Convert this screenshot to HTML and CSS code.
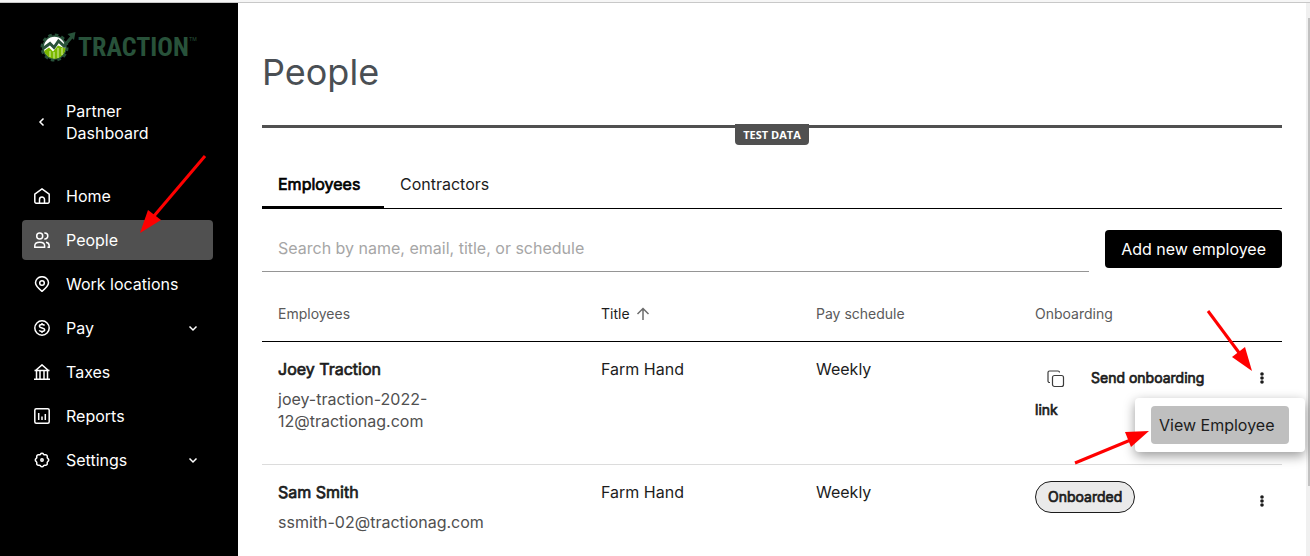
FILE: index.html
```html
<!DOCTYPE html>
<html lang="en">
<head>
  <meta charset="UTF-8">
  <meta name="viewport" content="width=device-width, initial-scale=1.0">
  <title>People - Traction</title>
  <link rel="stylesheet" href="styles.css">
</head>
<body>
  <div class="layout">
    <!-- Sidebar -->
    <aside class="sidebar">
      <a href="#" class="logo">
        <svg class="logo-mark" width="36" height="32" viewBox="0 0 36 32">
          <circle cx="14.500" cy="16.500" r="12.500" fill="none" stroke="#28523a" stroke-width="3" stroke-dasharray="3.5 3.040"/>
          <circle cx="14.500" cy="16.500" r="11.500" fill="#fff" stroke="#28523a" stroke-width="1.500"/>
          <path d="M4 20l5-3.500 4 4 5-6 7.500 3a11 11 0 0 1-21.500 2.500z" fill="#7ab800"/>
          <path d="M10 20v6M14 21v6.500M18 17v10M22 17v7" stroke="#d8edaa" stroke-width="1"/>
          <path d="M2.500 18l7.500-5.500 4 4L18.500 10l5.500 5L32.500 5" fill="none" stroke="#28523a" stroke-width="3"/>
          <path d="M27.500 3l8-2-1.500 8z" fill="#28523a"/>
        </svg>
        <span class="logo-text">TRACTION</span><span class="logo-tm">TM</span>
      </a>
      <a href="#" class="nav-link back">
        <svg class="icon" viewBox="0 0 16 16"><path d="M9.500 4.500L6 8l3.500 3.500"/></svg>
        <span>Partner Dashboard</span>
      </a>
      <nav class="nav">
        <a href="#" class="nav-link">
          <svg class="icon" viewBox="0 0 16 16"><path d="M.8 6.200L8 .9l7.200 5.300v7.600a1.400 1.400 0 0 1-1.400 1.400H2.200A1.400 1.400 0 0 1 .8 13.800zM5.500 15v-3.500a2.500 2.500 0 0 1 5 0V15"/></svg>
          <span>Home</span>
        </a>
        <a href="#" class="nav-link active">
          <svg class="icon" viewBox="0 0 16 16"><circle cx="5.700" cy="4" r="3"/><path d="M.8 15.200v-1.400c0-2 2-3.600 4.900-3.600s4.900 1.600 4.900 3.600v1.400zM10.300 1h.5a3 3 0 0 1 0 6h-.5M12 10.200c2 .3 3.200 1.700 3.200 3.600v1.400h-1.700"/></svg>
          <span>People</span>
          <svg class="arrow arrow-nav" width="68" height="80" viewBox="0 0 68 80"><path d="M66 2L15 62" stroke="red" stroke-width="3"/><path d="M1 79l8-23 13 10z" fill="red"/></svg>
        </a>
        <a href="#" class="nav-link">
          <svg class="icon" viewBox="0 0 16 16"><path d="M8 15.300C4 12 1.500 9.500 1.500 6.700a6.500 6 0 0 1 13 0C14.500 9.500 12 12 8 15.300z"/><circle cx="8" cy="7" r="2.300"/></svg>
          <span>Work locations</span>
        </a>
        <a href="#" class="nav-link">
          <svg class="icon" viewBox="0 0 16 16"><circle cx="8" cy="8" r="7.200"/><path d="M10.600 5.500C10 4.700 9 4.500 8 4.500c-1.500 0-2.600.6-2.600 1.700C5.400 8.500 10.700 7.500 10.700 9.800c0 1.100-1.200 1.700-2.700 1.700-1.100 0-2.200-.3-2.800-1.100M8 3v1.500M8 11.500V13"/></svg>
          <span>Pay</span>
          <svg class="icon chevron" viewBox="0 0 16 16"><path d="M4.500 6.500L8 10l3.500-3.500"/></svg>
        </a>
        <a href="#" class="nav-link">
          <svg class="icon" viewBox="0 0 16 16"><path d="M0 15.200h16M.5 6.500h15M1.500 6.500L8 .9l6.500 5.600M2.500 6.500v8.700M6 6.500v8.700M10 6.500v8.700M13.500 6.500v8.700"/></svg>
          <span>Taxes</span>
        </a>
        <a href="#" class="nav-link">
          <svg class="icon" viewBox="0 0 16 16"><rect x=".8" y=".8" width="14.400" height="14.400" rx="1.500"/><path d="M4.700 5v7M8 8.500V12M11.300 6v6"/></svg>
          <span>Reports</span>
        </a>
        <a href="#" class="nav-link">
          <svg class="icon" viewBox="0 0 16 16"><path d="M6.500 2.200a1.700 1.700 0 0 1 3 0 1.700 1.700 0 0 0 1.500.6 1.700 1.700 0 0 1 2.200 2.200 1.700 1.700 0 0 0 .6 1.500 1.700 1.700 0 0 1 0 3 1.700 1.700 0 0 0-.6 1.500 1.700 1.700 0 0 1-2.200 2.200 1.700 1.700 0 0 0-1.500.6 1.700 1.700 0 0 1-3 0 1.700 1.700 0 0 0-1.500-.6A1.700 1.700 0 0 1 2.800 11a1.700 1.700 0 0 0-.6-1.500 1.700 1.700 0 0 1 0-3A1.700 1.700 0 0 0 2.800 5 1.700 1.700 0 0 1 5 2.800a1.700 1.700 0 0 0 1.500-.6z"/><circle cx="8" cy="8" r="1.200"/></svg>
          <span>Settings</span>
          <svg class="icon chevron" viewBox="0 0 16 16"><path d="M4.500 6.500L8 10l3.500-3.500"/></svg>
        </a>
      </nav>
    </aside>
    <!-- End Sidebar -->

    <main class="main">
      <h1>People</h1>
      <div class="test-bar"><span class="test-label">TEST DATA</span></div>

      <div class="tabs" role="tablist">
        <button type="button" class="tab selected" role="tab" aria-selected="true">Employees</button>
        <button type="button" class="tab" role="tab" aria-selected="false">Contractors</button>
      </div>

      <form class="toolbar">
        <input type="text" class="search" aria-label="Search employees" placeholder="Search by name, email, title, or schedule">
        <button type="button" class="add-btn">Add new employee</button>
      </form>

      <table class="people">
        <colgroup>
          <col>
          <col class="col-title">
          <col class="col-pay">
          <col class="col-onboarding">
          <col class="col-actions">
        </colgroup>
        <thead>
          <tr>
            <th>Employees</th>
            <th class="sorted">Title <svg class="sort" width="14" height="14" viewBox="0 0 14 14"><path d="M7 13V2M1.500 7L7 1.500 12.500 7"/></svg></th>
            <th>Pay schedule</th>
            <th colspan="2">Onboarding</th>
          </tr>
        </thead>
        <tbody>
          <tr>
            <td>
              <div class="name">Joey Traction</div>
              <div class="email">joey-traction-2022-<wbr>12@tractionag.com</div>
            </td>
            <td>Farm Hand</td>
            <td>Weekly</td>
            <td>
              <button type="button" class="send-link"><svg class="copy" width="18" height="18" viewBox="0 0 18 18"><rect x="5.500" y="5.500" width="11" height="11" rx="2"/><path d="M3 12.500h-.5a1.500 1.500 0 0 1-1.500-1.500V2.500A1.500 1.500 0 0 1 2.500 1H11a1.500 1.500 0 0 1 1.500 1.500"/></svg>Send onboarding <br>link</button>
            </td>
            <td class="actions">
              <button type="button" class="kebab" aria-label="Actions for Joey Traction"><svg width="4" height="12" viewBox="0 0 4 12"><circle cx="2" cy="2" r="1.800"/><circle cx="2" cy="6" r="1.800"/><circle cx="2" cy="10" r="1.800"/></svg></button>
              <div class="menu">
                <button type="button" class="menu-item">View Employee</button>
              </div>
              <svg class="arrow arrow-kebab" width="48" height="64" viewBox="0 0 48 64"><path d="M2 2l32 43" stroke="red" stroke-width="3"/><path d="M46 62L26 48l13-10z" fill="red"/></svg>
              <svg class="arrow arrow-menu" width="78" height="38" viewBox="0 0 78 38"><path d="M2 36l58-24" stroke="red" stroke-width="3"/><path d="M76 4L52 5l6 15z" fill="red"/></svg>
            </td>
          </tr>
          <tr>
            <td>
              <div class="name">Sam Smith</div>
              <div class="email">ssmith-02@tractionag.com</div>
            </td>
            <td>Farm Hand</td>
            <td>Weekly</td>
            <td><span class="badge">Onboarded</span></td>
            <td class="actions">
              <button type="button" class="kebab" aria-label="Actions for Sam Smith"><svg width="4" height="12" viewBox="0 0 4 12"><circle cx="2" cy="2" r="1.800"/><circle cx="2" cy="6" r="1.800"/><circle cx="2" cy="10" r="1.800"/></svg></button>
            </td>
          </tr>
        </tbody>
      </table>
    </main>

    <div class="scroll-track"><div class="scroll-thumb"></div></div>
  </div>
</body>
</html>
```
FILE: styles.css
```css
* {
  box-sizing: border-box;
}

body {
  margin: 0;
  height: 100vh;
  overflow: hidden;
  display: flex;
  flex-direction: column;
  border-top: 2px solid #f6f6f6;
  font-family: Inter, "Liberation Sans", sans-serif;
  font-size: 16px;
  line-height: 22px;
  color: #1c1c1c;
  background: #fff;
}

button,
input {
  font: inherit;
  color: inherit;
  border: none;
  background: none;
}

button {
  cursor: pointer;
}

.layout {
  flex: 1;
  min-height: 0;
  display: flex;
  border-top: 1px solid #c8c8c8;
}

/* Sidebar */
.sidebar {
  flex: none;
  width: 238px;
  padding: 28px 25px 0 22px;
  background: #000;
}

.logo {
  display: flex;
  align-items: center;
  height: 32px;
  padding-left: 18px;
  color: #28523a;
  text-decoration: none;
}

.logo-mark {
  flex: none;
}

.logo-text {
  margin-left: 2px;
  font-family: "Liberation Sans Narrow", "Roboto Condensed", "DejaVu Sans Condensed", sans-serif;
  font-size: 26px;
  line-height: 32px;
  font-weight: 700;
}

.logo-tm {
  align-self: flex-start;
  font-size: 5px;
  line-height: 16px;
}

.nav {
  display: flex;
  flex-direction: column;
  gap: 4px;
  margin-top: 32px;
}

.nav-link {
  position: relative;
  display: flex;
  align-items: center;
  gap: 16px;
  min-height: 40px;
  padding: 0 12px;
  border-radius: 4px;
  color: #fff;
  text-decoration: none;
}

.nav-link.active {
  background: #505050;
}

.back {
  margin-top: 37px;
  padding-right: 40px;
}

.icon {
  flex: none;
  width: 16px;
  height: 16px;
  fill: none;
  stroke: #fff;
  stroke-width: 1.5;
}

.chevron {
  margin-left: auto;
}
/* End Sidebar */

.main {
  flex: 1;
  min-width: 0;
  padding: 45px 24px 0;
}

h1 {
  margin: 0;
  font-size: 36px;
  line-height: 48px;
  font-weight: 400;
  color: #4a4f54;
}

.test-bar {
  display: flex;
  justify-content: center;
  height: 20px;
  margin-top: 29px;
  border-top: 3px solid #505050;
}

.test-label {
  height: 21px;
  margin-top: -4px;
  padding: 4px 8px 0;
  border-radius: 0 0 4px 4px;
  background: #505050;
  color: #fff;
  font-family: "Open Sans", "Noto Sans", sans-serif;
  font-size: 11px;
  line-height: 14px;
  font-weight: 700;
}

/* Tabs */
.tabs {
  display: flex;
  margin-top: 16px;
  box-shadow: inset 0 -1px #000;
}

.tab {
  height: 48px;
  padding: 0 16px 2px;
  text-align: left;
}

.tab.selected {
  min-width: 122px;
  padding: 1px 16px 0;
  border-bottom: 3px solid #000;
  color: #000;
}

/* Toolbar */
.toolbar {
  display: flex;
  align-items: flex-end;
  gap: 16px;
  margin-top: 15px;
}

.search {
  flex: 1;
  min-width: 0;
  height: 48px;
  padding: 0 16px;
  border-bottom: 1px solid #959595;
}

.search::placeholder {
  color: #a6a6a6;
}

.add-btn {
  height: 38px;
  margin-bottom: 4px;
  padding: 0 16px;
  border-radius: 4px;
  background: #000;
  color: #fff;
}

/* People table */
.people {
  width: 100%;
  margin-top: 16px;
  table-layout: fixed;
  border-collapse: collapse;
}

.col-title {
  width: 215px;
}

.col-pay {
  width: 219px;
}

.col-onboarding {
  width: 223px;
}

.col-actions {
  width: 40px;
}

.people th {
  height: 53px;
  padding: 0 16px;
  border-bottom: 1px solid #000;
  font-size: 14px;
  font-weight: 400;
  text-align: left;
  color: #5a5a5a;
}

.people th.sorted {
  color: #1c1c1c;
}

.sort {
  margin-left: 2px;
  vertical-align: -2px;
  fill: none;
  stroke: #6c6c6c;
  stroke-width: 1.5;
}

.people td {
  padding: 16px 16px 32px;
  border-bottom: 1px solid #dcdcdc;
  vertical-align: top;
}

/* heavier text at the regular width */
.tab.selected,
.name,
.send-link,
.badge {
  -webkit-text-stroke: 0.7px;
}

.email {
  margin-top: 8px;
  color: #505050;
}

.send-link {
  padding: 4px 0 0;
  text-align: left;
  font-size: 14px;
  line-height: 32px;
}

.copy {
  margin: 0 26px 0 12px;
  vertical-align: middle;
  fill: none;
  stroke: #3c3c3c;
  stroke-width: 1.2;
}

.badge {
  display: inline-block;
  height: 32px;
  padding: 0 12px;
  border: 1px solid #1c1c1c;
  border-radius: 16px;
  background: #eaeaea;
  font-size: 14px;
  line-height: 30px;
}

.people td.actions {
  position: relative;
  padding: 16px 0 0;
}

.kebab {
  display: flex;
  align-items: center;
  justify-content: center;
  width: 40px;
  height: 40px;
  padding: 0;
  fill: #1c1c1c;
}

.menu {
  position: absolute;
  top: 56px;
  right: -23px;
  z-index: 1;
  width: 170px;
  padding: 8px 16px;
  border-radius: 4px;
  background: #fff;
  box-shadow: 0 4px 12px rgba(0, 0, 0, 0.4);
}

.menu-item {
  width: 100%;
  height: 38px;
  padding: 0 8px;
  border-radius: 4px;
  background: #bfbfbf;
  text-align: left;
}

/* Pointer arrows */
.arrow {
  position: absolute;
  z-index: 2;
}

.arrow-nav {
  top: -66px;
  left: 117px;
}

.arrow-kebab {
  top: -33px;
  right: 28px;
}

.arrow-menu {
  top: 85px;
  right: 131px;
}

/* Scrollbar */
.scroll-track {
  flex: none;
  width: 4px;
  padding: 15px 0 0 2px;
  background: #f0f0f0;
}

.scroll-thumb {
  height: 87%;
  background: #c1c1c1;
}
```
